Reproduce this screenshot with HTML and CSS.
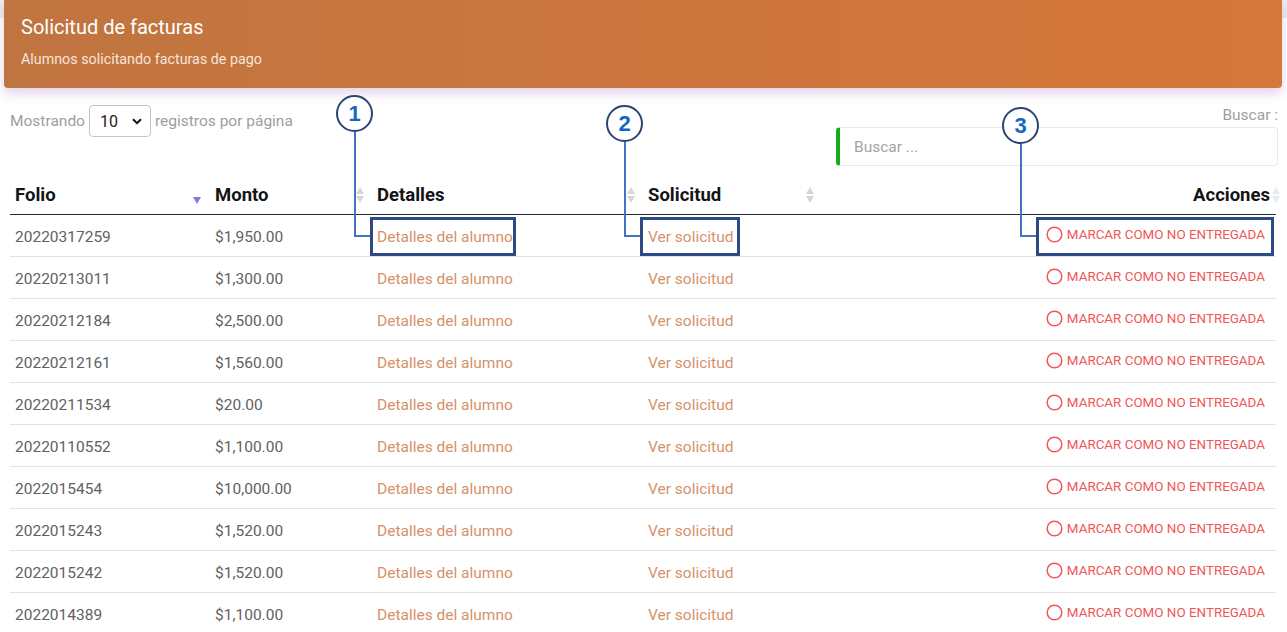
FILE: index.html
```html
<!DOCTYPE html>
<html lang="es">
<head>
<meta charset="utf-8">
<title>Solicitud de facturas</title>
<link rel="stylesheet" href="styles.css">
</head>
<body>
<header class="header">
  <h1 class="header-title">Solicitud de facturas</h1>
  <p class="header-sub">Alumnos solicitando facturas de pago</p>
</header>

<main class="content">
  <div class="controls">
    <div class="length">
      <span>Mostrando</span>
      <div class="select-wrap">
        <select class="select"><option>10</option><option>25</option><option>50</option></select>
        <svg class="chev" width="10" height="7" viewBox="0 0 10 7"><path d="M1 1.2 5 5.2 9 1.2" fill="none" stroke="#111" stroke-width="2"/></svg>
      </div>
      <span>registros por página</span>
    </div>
    <div class="search">
      <label class="search-label">Buscar :</label>
      <input class="search-input" type="text" placeholder="Buscar ...">
    </div>
  </div>

  <table class="table">
    <colgroup>
      <col class="c1"><col class="c2"><col class="c3"><col class="c4"><col class="c5">
    </colgroup>
    <thead>
      <tr>
        <th>Folio<span class="sort-desc"></span></th>
        <th>Monto<span class="sort"></span></th>
        <th>Detalles<span class="sort"></span></th>
        <th>Solicitud<span class="sort"></span></th>
        <th class="right">Acciones<span class="sort edge"></span></th>
      </tr>
    </thead>
    <tbody id="rows"></tbody>
  </table>
</main>

<div class="ann-circle" style="left:336px;top:95px">1</div>
<div class="ann-circle" style="left:606px;top:105px">2</div>
<div class="ann-circle" style="left:1002px;top:107px">3</div>

<div class="ann-vline" style="left:354px;top:132px;height:105px"></div>
<div class="ann-hline" style="left:354px;top:235px;width:18px"></div>
<div class="ann-vline" style="left:624px;top:142px;height:95px"></div>
<div class="ann-hline" style="left:624px;top:235px;width:18px"></div>
<div class="ann-vline" style="left:1020px;top:144px;height:93px"></div>
<div class="ann-hline" style="left:1020px;top:235px;width:18px"></div>

<div class="ann-box" style="left:370px;top:217px;width:146px;height:39px"></div>
<div class="ann-box" style="left:640px;top:217px;width:100px;height:39px"></div>
<div class="ann-box" style="left:1036px;top:217px;width:238px;height:39px"></div>

<script src="app.js"></script>
</body>
</html>
```

FILE: app.js
```js
const data = [
  ["20220317259", "$1,950.00"],
  ["20220213011", "$1,300.00"],
  ["20220212184", "$2,500.00"],
  ["20220212161", "$1,560.00"],
  ["20220211534", "$20.00"],
  ["20220110552", "$1,100.00"],
  ["2022015454", "$10,000.00"],
  ["2022015243", "$1,520.00"],
  ["2022015242", "$1,520.00"],
  ["2022014389", "$1,100.00"]
];
const tbody = document.getElementById("rows");
tbody.innerHTML = data.map(([f, m]) => `
  <tr>
    <td>${f}</td>
    <td>${m}</td>
    <td><a class="link" href="#">Detalles del alumno</a></td>
    <td><a class="link" href="#">Ver solicitud</a></td>
    <td class="right"><a class="action" href="#"><svg width="17" height="17" viewBox="0 0 17 17"><circle cx="8.5" cy="8.5" r="7.3" fill="none" stroke="#f25558" stroke-width="1.5"/></svg>MARCAR COMO NO ENTREGADA</a></td>
  </tr>`).join("");
```

FILE: styles.css
```css
* { box-sizing: border-box; }
html, body { margin: 0; padding: 0; }
body {
  font-family: Roboto, "Liberation Sans", Arial, sans-serif;
  background: linear-gradient(#ececec 0 18px, #fff 18px);
  width: 1287px;
  height: 632px;
  overflow: hidden;
  position: relative;
}
.header {
  margin: 0 5px 0 4px;
  height: 88px;
  padding: 15px 17px 0;
  background: linear-gradient(90deg, #c07440 0%, #cc763e 50%, #d6773b 100%);
  border-radius: 0 0 4px 4px;
  box-shadow: 0 5px 12px rgba(150, 90, 180, 0.28);
  color: #fff;
}
.header-title {
  margin: 0;
  font-size: 20px;
  font-weight: 400;
  line-height: 24px;
}
.header-sub {
  margin: 11px 0 0;
  font-size: 14.3px;
  line-height: 18px;
  color: #f6e6da;
}
.content {
  padding: 0 11px 0 10px;
}
.controls {
  display: flex;
  justify-content: space-between;
  align-items: flex-start;
  height: 87px;
}
.length {
  display: flex;
  align-items: center;
  gap: 4px;
  margin-top: 17px;
  font-size: 15.5px;
  color: #9e9e9e;
  font-weight: 400;
}
.select-wrap {
  position: relative;
  width: 62px;
  height: 32px;
}
.select {
  appearance: none;
  -webkit-appearance: none;
  width: 100%;
  height: 100%;
  border: 1px solid #c4c4c4;
  border-radius: 4px;
  background: #fff;
  padding: 0 0 0 10px;
  font-family: inherit;
  font-size: 16px;
  color: #222;
}
.chev {
  position: absolute;
  right: 9px;
  top: 13px;
  pointer-events: none;
}
.search {
  display: flex;
  flex-direction: column;
  align-items: flex-end;
  padding-top: 17px;
  margin-right: -2px;
}
.search-label {
  font-size: 15.5px;
  line-height: 20px;
  color: #9e9e9e;
  margin-bottom: 2px;
}
.search-input {
  width: 442px;
  height: 39px;
  border: 1px solid #e8e8e8;
  border-left: 4px solid #1aab1a;
  border-radius: 4px;
  padding: 0 0 0 14px;
  font-family: inherit;
  font-size: 15.5px;
  color: #333;
  outline: none;
}
.search-input::placeholder { color: #a3a3a3; }
.table {
  width: 1266px;
  border-collapse: collapse;
  table-layout: fixed;
}
.c1 { width: 200px; }
.c2 { width: 162px; }
.c3 { width: 271px; }
.c4 { width: 179px; }
.c5 { width: 454px; }
th {
  position: relative;
  height: 39px;
  padding: 2px 5px 0;
  text-align: left;
  font-size: 18.5px;
  font-weight: 700;
  color: #141414;
  border-bottom: 1px solid #2a2a2a;
}
th.right { text-align: right; padding-right: 6px; }
td.right { text-align: right; padding-right: 11px; }
td {
  height: 42px;
  padding: 3px 5px 0;
  font-size: 15.5px;
  font-weight: 400;
  color: #616161;
  border-bottom: 1px solid #e2e2e2;
}
.sort {
  position: absolute;
  right: 8px;
  top: 12px;
  width: 8px;
  height: 16px;
}
.sort::before, .sort::after {
  content: "";
  position: absolute;
  left: 0;
  border-left: 4px solid transparent;
  border-right: 4px solid transparent;
}
.sort::before { top: 0; border-bottom: 7px solid #d6d6d6; }
.sort::after { bottom: 0; border-top: 7px solid #d6d6d6; }
.sort.edge { right: -4px; opacity: 0.5; }
.sort-desc {
  position: absolute;
  right: 9px;
  top: 22px;
  width: 0;
  height: 0;
  border-left: 4px solid transparent;
  border-right: 4px solid transparent;
  border-top: 7px solid #7b7de0;
}
.link {
  color: #d6916a;
  text-decoration: none;
}
.action {
  display: inline-flex;
  align-items: center;
  gap: 4px;
  color: #f25558;
  font-size: 13.4px;
  text-decoration: none;
}
.ann-circle {
  position: absolute;
  width: 37px;
  height: 37px;
  border: 2px solid #2c4475;
  border-radius: 50%;
  background: #fff;
  color: #1169bf;
  font-family: "Liberation Sans", Arial, sans-serif;
  font-weight: 700;
  font-size: 22px;
  line-height: 33px;
  text-align: center;
}
.ann-vline {
  position: absolute;
  width: 2px;
  background: #4472c4;
}
.ann-hline {
  position: absolute;
  height: 2px;
  background: #4472c4;
}
.ann-box {
  position: absolute;
  border: 3px solid #2d4a85;
}
```
